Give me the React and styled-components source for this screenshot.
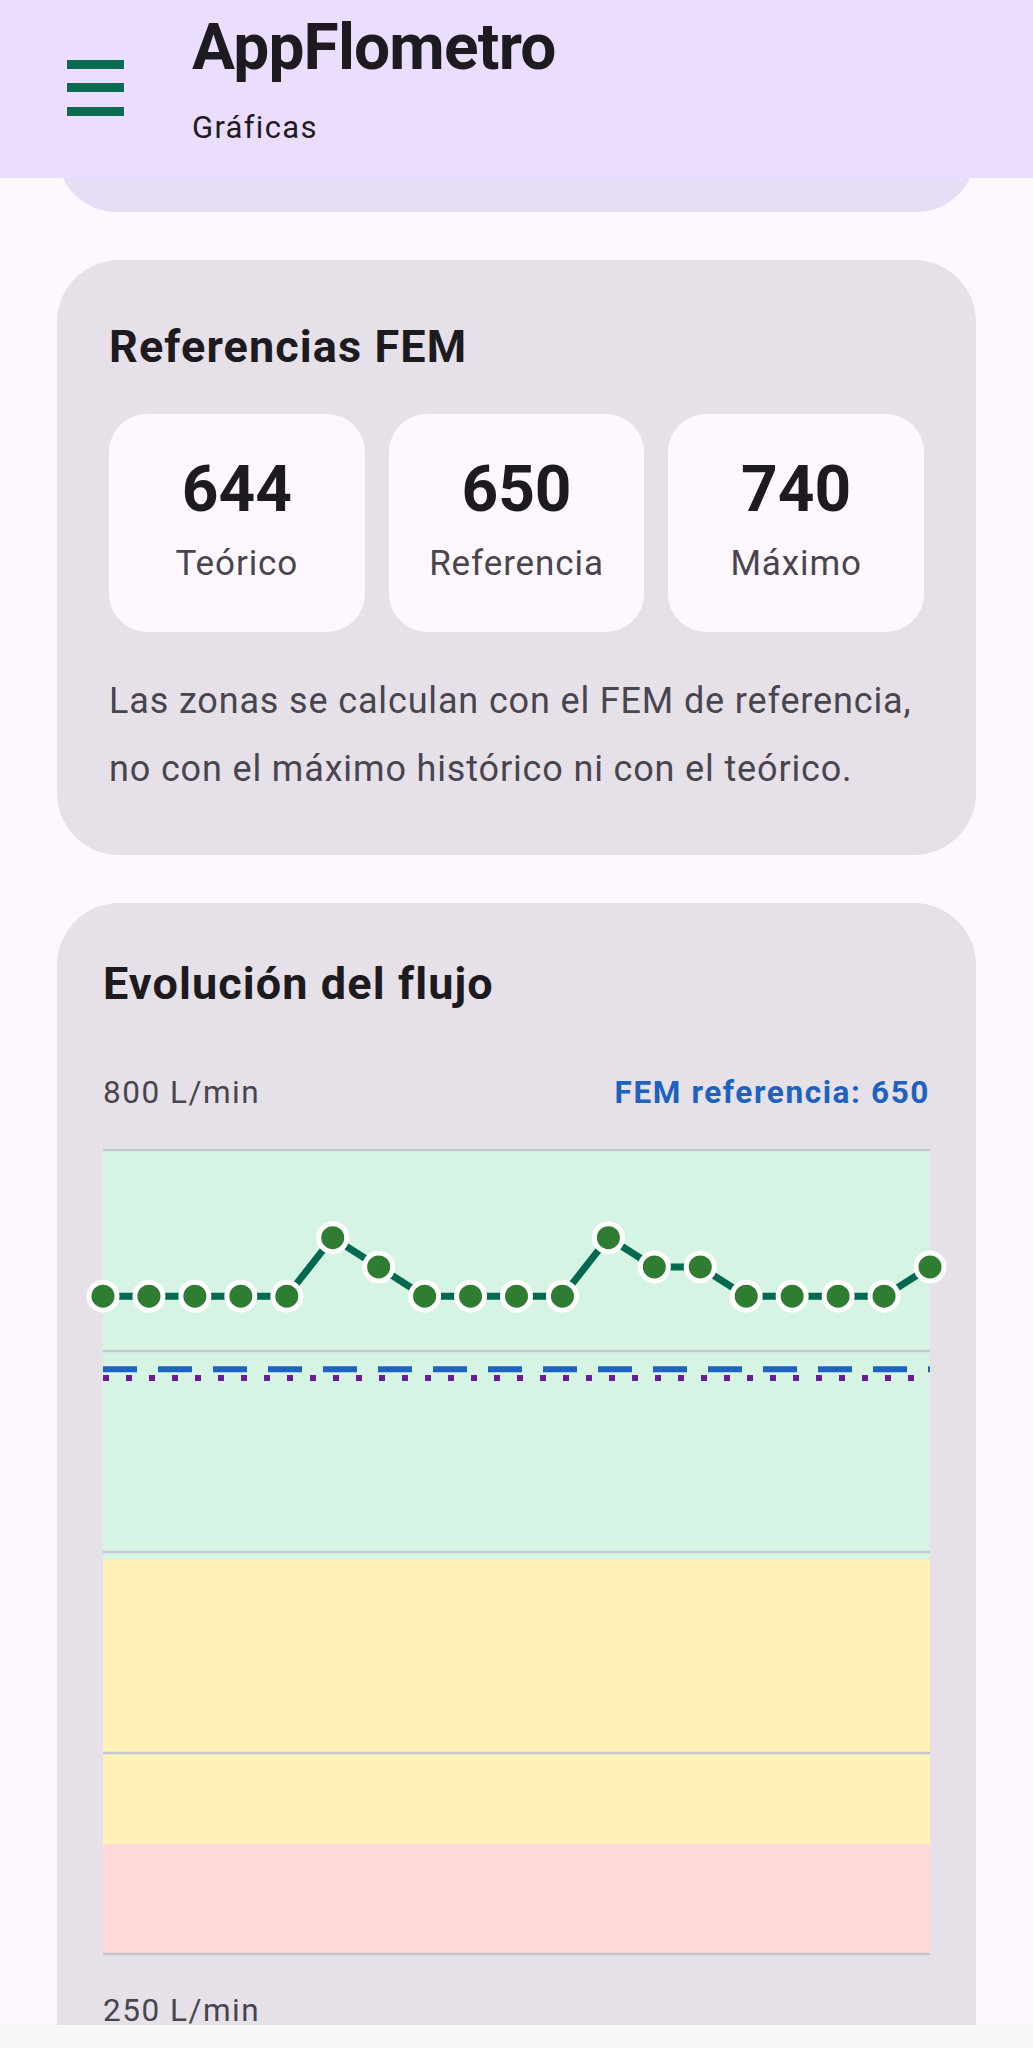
import React from 'react';
import styled, { createGlobalStyle } from 'styled-components';

const GlobalStyle = createGlobalStyle`
  html, body {
    margin: 0;
    padding: 0;
    background: #fef7ff;
    font-family: Roboto, "Noto Sans", "Liberation Sans", sans-serif;
    color: #1d1b20;
  }
`;

const Screen = styled.div`
  height: 2048px;
  display: flex;
  flex-direction: column;
  overflow: hidden;
  background: #fef7ff;
`;

const TopBar = styled.header`
  flex-shrink: 0;
  height: 178px;
  box-sizing: border-box;
  padding: 10px 0 0 67px;
  display: flex;
  align-items: flex-start;
  background: #eaddff;
`;

const MenuButton = styled.div`
  margin-top: 50px;
  margin-right: 68px;
  width: 57px;
  height: 56px;
  display: flex;
`;

const TitleBlock = styled.div`
  display: flex;
  flex-direction: column;
`;

const AppTitle = styled.h1`
  margin: 0;
  font-size: 64px;
  line-height: 75px;
  font-weight: 700;
  letter-spacing: -0.8px;
  color: #1d1b20;
`;

const AppSubtitle = styled.div`
  margin-top: 24px;
  font-size: 31px;
  line-height: 38px;
  letter-spacing: 1.3px;
  color: #1d1b20;
`;

const Main = styled.main`
  flex: 1;
  overflow: hidden;
`;

const ScrollContent = styled.div`
  margin-top: -86px;
  padding: 0 57px;
  display: flex;
  flex-direction: column;
  gap: 48px;
`;

const Card = styled.section`
  border-radius: 62px;
  background: ${p => (p.tinted ? '#e7def6' : '#e6e0e9')};
  padding: ${p => p.pad || '52px'};
  height: ${p => p.h || 'auto'};
  box-sizing: border-box;
  flex-shrink: 0;
`;

const CardTitle = styled.h2`
  margin: 0;
  font-size: 45px;
  line-height: 54px;
  font-weight: 700;
  letter-spacing: 1.1px;
  color: #1d1b20;
`;

const StatRow = styled.div`
  margin-top: 40px;
  display: flex;
  gap: 24px;
`;

const StatBox = styled.div`
  flex: 1;
  border-radius: 38px;
  background: #fef7ff;
  padding: 38px 0 46px;
  display: flex;
  flex-direction: column;
  align-items: center;
`;

const StatValue = styled.div`
  font-size: 64px;
  line-height: 75px;
  font-weight: 700;
  color: #1d1b20;
`;

const StatLabel = styled.div`
  margin-top: 15px;
  font-size: 35px;
  line-height: 44px;
  letter-spacing: 0.9px;
  color: #49454f;
`;

const Note = styled.p`
  margin: 35px 0 0;
  font-size: 36px;
  line-height: 68px;
  letter-spacing: 0.85px;
  color: #49454f;
  white-space: nowrap;
`;

const AxisRow = styled.div`
  margin-top: ${p => p.mt || '0'};
  display: flex;
  justify-content: space-between;
  align-items: baseline;
  font-size: 31.5px;
  line-height: ${p => p.lh || '40px'};
  letter-spacing: 1.5px;
  color: #49454f;
`;

const RefTag = styled.span`
  font-weight: 700;
  color: #1e62c0;
  letter-spacing: 1.6px;
`;

const ChartBox = styled.div`
  margin-top: 35px;
  height: 808px;
`;

const BottomStrip = styled.div`
  flex-shrink: 0;
  height: 23px;
  background: #faf7fa;
`;

const values = [700, 700, 700, 700, 700, 740, 720, 700, 700, 700, 700, 740, 720, 720, 700, 700, 700, 700, 720];

const W = 827;
const yOf = v => 2 + ((800 - v) / 550) * 804;

function MenuIcon() {
  return (
    <svg width="57" height="56" viewBox="0 0 57 56">
      <rect x="0" y="0" width="57" height="9" fill="#0a6b50" />
      <rect x="0" y="23" width="57" height="9" fill="#0a6b50" />
      <rect x="0" y="47" width="57" height="9" fill="#0a6b50" />
    </svg>
  );
}

function FlowChart() {
  const step = W / (values.length - 1);
  const pts = values.map((v, i) => [i * step, yOf(v)]);
  const grid = [0, 1, 2, 3, 4].map(k => 2 + k * 201);
  return (
    <svg width={W} height="808" viewBox={`0 0 ${W} 808`} style={{ overflow: 'visible', display: 'block' }}>
      <rect x="0" y="0" width={W} height={yOf(520)} fill="#d6f4e4" />
      <rect x="0" y={yOf(520)} width={W} height={yOf(325) - yOf(520)} fill="#fff2b9" />
      <rect x="0" y={yOf(325)} width={W} height={806 - yOf(325)} fill="#ffdad6" />
      {grid.map(g => (
        <line key={g} x1="0" x2={W} y1={g} y2={g} stroke="#c9c5cc" strokeWidth="2.5" />
      ))}
      <line x1="0" x2={W} y1={yOf(650)} y2={yOf(650)} stroke="#1e63c3" strokeWidth="6" strokeDasharray="34 21" />
      <line x1="0" x2={W} y1={yOf(644)} y2={yOf(644)} stroke="#6a1b9a" strokeWidth="6" strokeDasharray="6 17" />
      <polyline
        points={pts.map(p => p.join(',')).join(' ')}
        fill="none"
        stroke="#00694f"
        strokeWidth="7"
        strokeLinejoin="round"
      />
      {pts.map(([x, y], i) => (
        <circle key={i} cx={x} cy={y} r="14" fill="#2e7d32" stroke="#ffffff" strokeWidth="5" />
      ))}
    </svg>
  );
}

export default function App() {
  return (
    <Screen>
      <GlobalStyle />
      <TopBar>
        <MenuButton>
          <MenuIcon />
        </MenuButton>
        <TitleBlock>
          <AppTitle>AppFlometro</AppTitle>
          <AppSubtitle>Gráficas</AppSubtitle>
        </TitleBlock>
      </TopBar>
      <Main>
        <ScrollContent>
          <Card tinted h="120px" />

          <Card pad="60px 52px 52px">
            <CardTitle>Referencias FEM</CardTitle>
            <StatRow>
              <StatBox>
                <StatValue>644</StatValue>
                <StatLabel>Teórico</StatLabel>
              </StatBox>
              <StatBox>
                <StatValue>650</StatValue>
                <StatLabel>Referencia</StatLabel>
              </StatBox>
              <StatBox>
                <StatValue>740</StatValue>
                <StatLabel>Máximo</StatLabel>
              </StatBox>
            </StatRow>
            <Note>
              Las zonas se calculan con el FEM de referencia,
              <br />
              no con el máximo histórico ni con el teórico.
            </Note>
          </Card>

          <Card pad="54px 46px 60px">
            <CardTitle>Evolución del flujo</CardTitle>
            <AxisRow mt="62px">
              <span>800 L/min</span>
              <RefTag>FEM referencia: 650</RefTag>
            </AxisRow>
            <ChartBox>
              <FlowChart />
            </ChartBox>
            <AxisRow mt="41px" lh="28px">
              <span>250 L/min</span>
            </AxisRow>
          </Card>
        </ScrollContent>
      </Main>
      <BottomStrip />
    </Screen>
  );
}
